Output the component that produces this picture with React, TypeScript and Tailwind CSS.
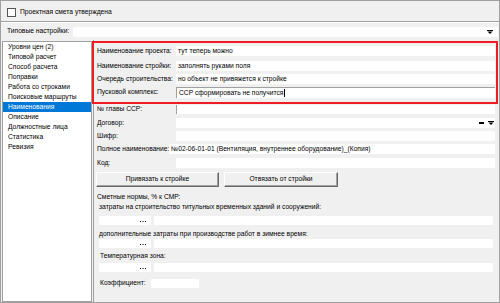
import React from "react";

function Field({ children, className = "" }: { children?: React.ReactNode; className?: string }) {
  return (
    <div className={`bg-white flex items-center pl-[2px] overflow-hidden whitespace-nowrap ${className}`}>{children}</div>
  );
}

function Arrow() {
  return (
    <svg width="6" height="4" viewBox="0 0 6 4" className="block">
      <rect x="0" y="0" width="6" height="1" fill="#000" />
      <polygon points="0.5,1.5 5.5,1.5 3,4" fill="#000" />
    </svg>
  );
}

function Row({ label, children, className = "" }: { label: string; children?: React.ReactNode; className?: string }) {
  return (
    <div className={`flex items-center ${className}`}>
      <div className="w-[79px] shrink-0 whitespace-nowrap">{label}</div>
      {children}
    </div>
  );
}

const menu = [
  "Уровни цен (2)",
  "Типовой расчет",
  "Способ расчета",
  "Поправки",
  "Работа со строками",
  "Поисковые маршруты",
  "Наименования",
  "Описание",
  "Должностные лица",
  "Статистика",
  "Ревизия",
];

function Btn({ children, className = "" }: { children: React.ReactNode; className?: string }) {
  return (
    <div
      className={`h-[15px] flex items-center justify-center bg-[#f0f0f0] border border-t-white border-l-white border-r-[#696969] border-b-[#696969] shadow-[inset_-1px_-1px_0_#a0a0a0] ${className}`}
    >
      {children}
    </div>
  );
}

function Dots() {
  return (
    <svg width="6" height="2" viewBox="0 0 6 2" className="block">
      <rect x="0" y="0" width="1" height="1" fill="#000" />
      <rect x="2.5" y="0" width="1" height="1" fill="#000" />
      <rect x="5" y="0" width="1" height="1" fill="#000" />
    </svg>
  );
}

function DotsRow({ className = "" }: { className?: string }) {
  return (
    <div className={`flex items-center h-[9px] pl-[5px] pr-[6px] ${className}`}>
      <div className="w-[52px] h-full bg-white flex items-center justify-end pr-[5px] pt-[2px]">
        <Dots />
      </div>
      <div className="flex-1 h-full bg-white ml-[3px]" />
    </div>
  );
}

export default function App() {
  return (
    <div className="w-[500px] h-[303px] bg-[#f0f0f0] border border-[#a0a0a0] flex flex-col overflow-hidden font-['Liberation_Sans',Arial,sans-serif] text-[6.7px] leading-none text-black">
      {/* checkbox row */}
      <div className="h-[20px] flex items-center pl-[6px] shrink-0">
        <div className="w-[9px] h-[9px] bg-white border border-[#555] mt-[2px]" />
        <div className="ml-[4px] mt-[2px]">Проектная смета утверждена</div>
      </div>
      <div className="h-px bg-[#a0a0a0] shrink-0" />
      <div className="h-px bg-white shrink-0" />
      {/* typical settings */}
      <div className="h-[17px] flex items-center shrink-0 pr-px">
        <div className="w-[72px] pl-[6px] whitespace-nowrap">Типовые настройки:</div>
        <div className="flex-1 h-[10px] bg-white flex items-center justify-end pr-[5px]">
          <Arrow />
        </div>
      </div>
      {/* main */}
      <div className="flex-1 flex min-h-0">
        <div className="ml-px mt-px w-[90px] bg-white border border-[#a0a0a0] flex flex-col">
          {menu.map((m) => (
            <div
              key={m}
              className={`h-[10px] shrink-0 flex items-center pl-[5px] whitespace-nowrap ${
                m === "Наименования" ? "bg-[#0078d7] text-white" : ""
              }`}
            >
              {m}
            </div>
          ))}
        </div>
        <div className="flex-1 ml-px border-l border-[#a0a0a0] flex flex-col min-w-0">
          {/* red highlighted block */}
          <div className="-ml-[2px] mr-px mt-px h-[63px] border-2 border-[#ee1c24] flex flex-col pl-[3px] pr-px pt-[1px] shrink-0">
            <Row label="Наименование проекта:" className="mt-[2px]">
              <Field className="flex-1 h-[10px]">тут теперь можно</Field>
            </Row>
            <Row label="Наименование стройки:" className="mt-[5px]">
              <Field className="flex-1 h-[10px]">заполнять руками поля</Field>
            </Row>
            <Row label="Очередь строительства:" className="mt-[3px]">
              <Field className="flex-1 h-[10px]">но объект не привяжется к стройке</Field>
            </Row>
            <Row label="Пусковой комплекс:" className="mt-[3px]">
              <Field className="flex-1 h-[11px] border-t border-l border-[#a0a0a0]">
                ССР сформировать не получится
                <span className="inline-block w-px h-[8px] bg-black ml-px" />
              </Field>
            </Row>
          </div>
          <div className="flex flex-col pl-[3px] pr-[4px]">
            <Row label="№ главы ССР:" className="mt-px">
              <Field className="flex-1 h-[9px] border-l border-[#a0a0a0]" />
            </Row>
            <Row label="Договор:" className="mt-[4px]">
              <Field className="flex-1 h-[10px] justify-end pr-[1px] gap-[4px]">
                <div className="w-[5px] h-[1.5px] bg-black" />
                <Arrow />
              </Field>
            </Row>
            <Row label="Шифр:" className="mt-[3px]">
              <Field className="flex-1 h-[10px]" />
            </Row>
            <div className="flex items-center mt-[3px]">
              <div className="w-[72px] shrink-0 whitespace-nowrap">Полное наименование:</div>
              <Field className="flex-1 h-[10px]">№02-06-01-01 (Вентиляция, внутреннее оборудование)_(Копия)</Field>
            </div>
            <Row label="Код:" className="mt-[4px]">
              <Field className="flex-1 h-[10px]" />
            </Row>
          </div>
          <div className="flex mt-[4px] pl-[2px]">
            <Btn className="w-[123px]">Привязать к стройке</Btn>
            <Btn className="w-[114px] ml-[5px]">Отвязать от стройки</Btn>
          </div>
          <div className="h-[8px] mt-[6px] pl-[3px] flex items-center whitespace-nowrap">Сметные нормы, % к СМР:</div>
          <div className="h-[8px] mt-[2px] pl-[5px] flex items-center whitespace-nowrap">
            затраты на строительство титульных временных зданий и сооружений:
          </div>
          <DotsRow className="mt-[5px]" />
          <div className="h-[8px] mt-[5px] pl-[5px] flex items-center whitespace-nowrap">
            дополнительные затраты при производстве работ в зимнее время:
          </div>
          <DotsRow className="mt-px" />
          <div className="h-[8px] mt-[4px] pl-[6px] flex items-center whitespace-nowrap">Температурная зона:</div>
          <DotsRow className="mt-[3px]" />
          <div className="h-[9px] mt-[7px] pl-[6px] flex items-center whitespace-nowrap">
            <div className="w-[51px]">Коэффициент:</div>
            <div className="w-[48px] h-full bg-white" />
          </div>
        </div>
      </div>
    </div>
  );
}
